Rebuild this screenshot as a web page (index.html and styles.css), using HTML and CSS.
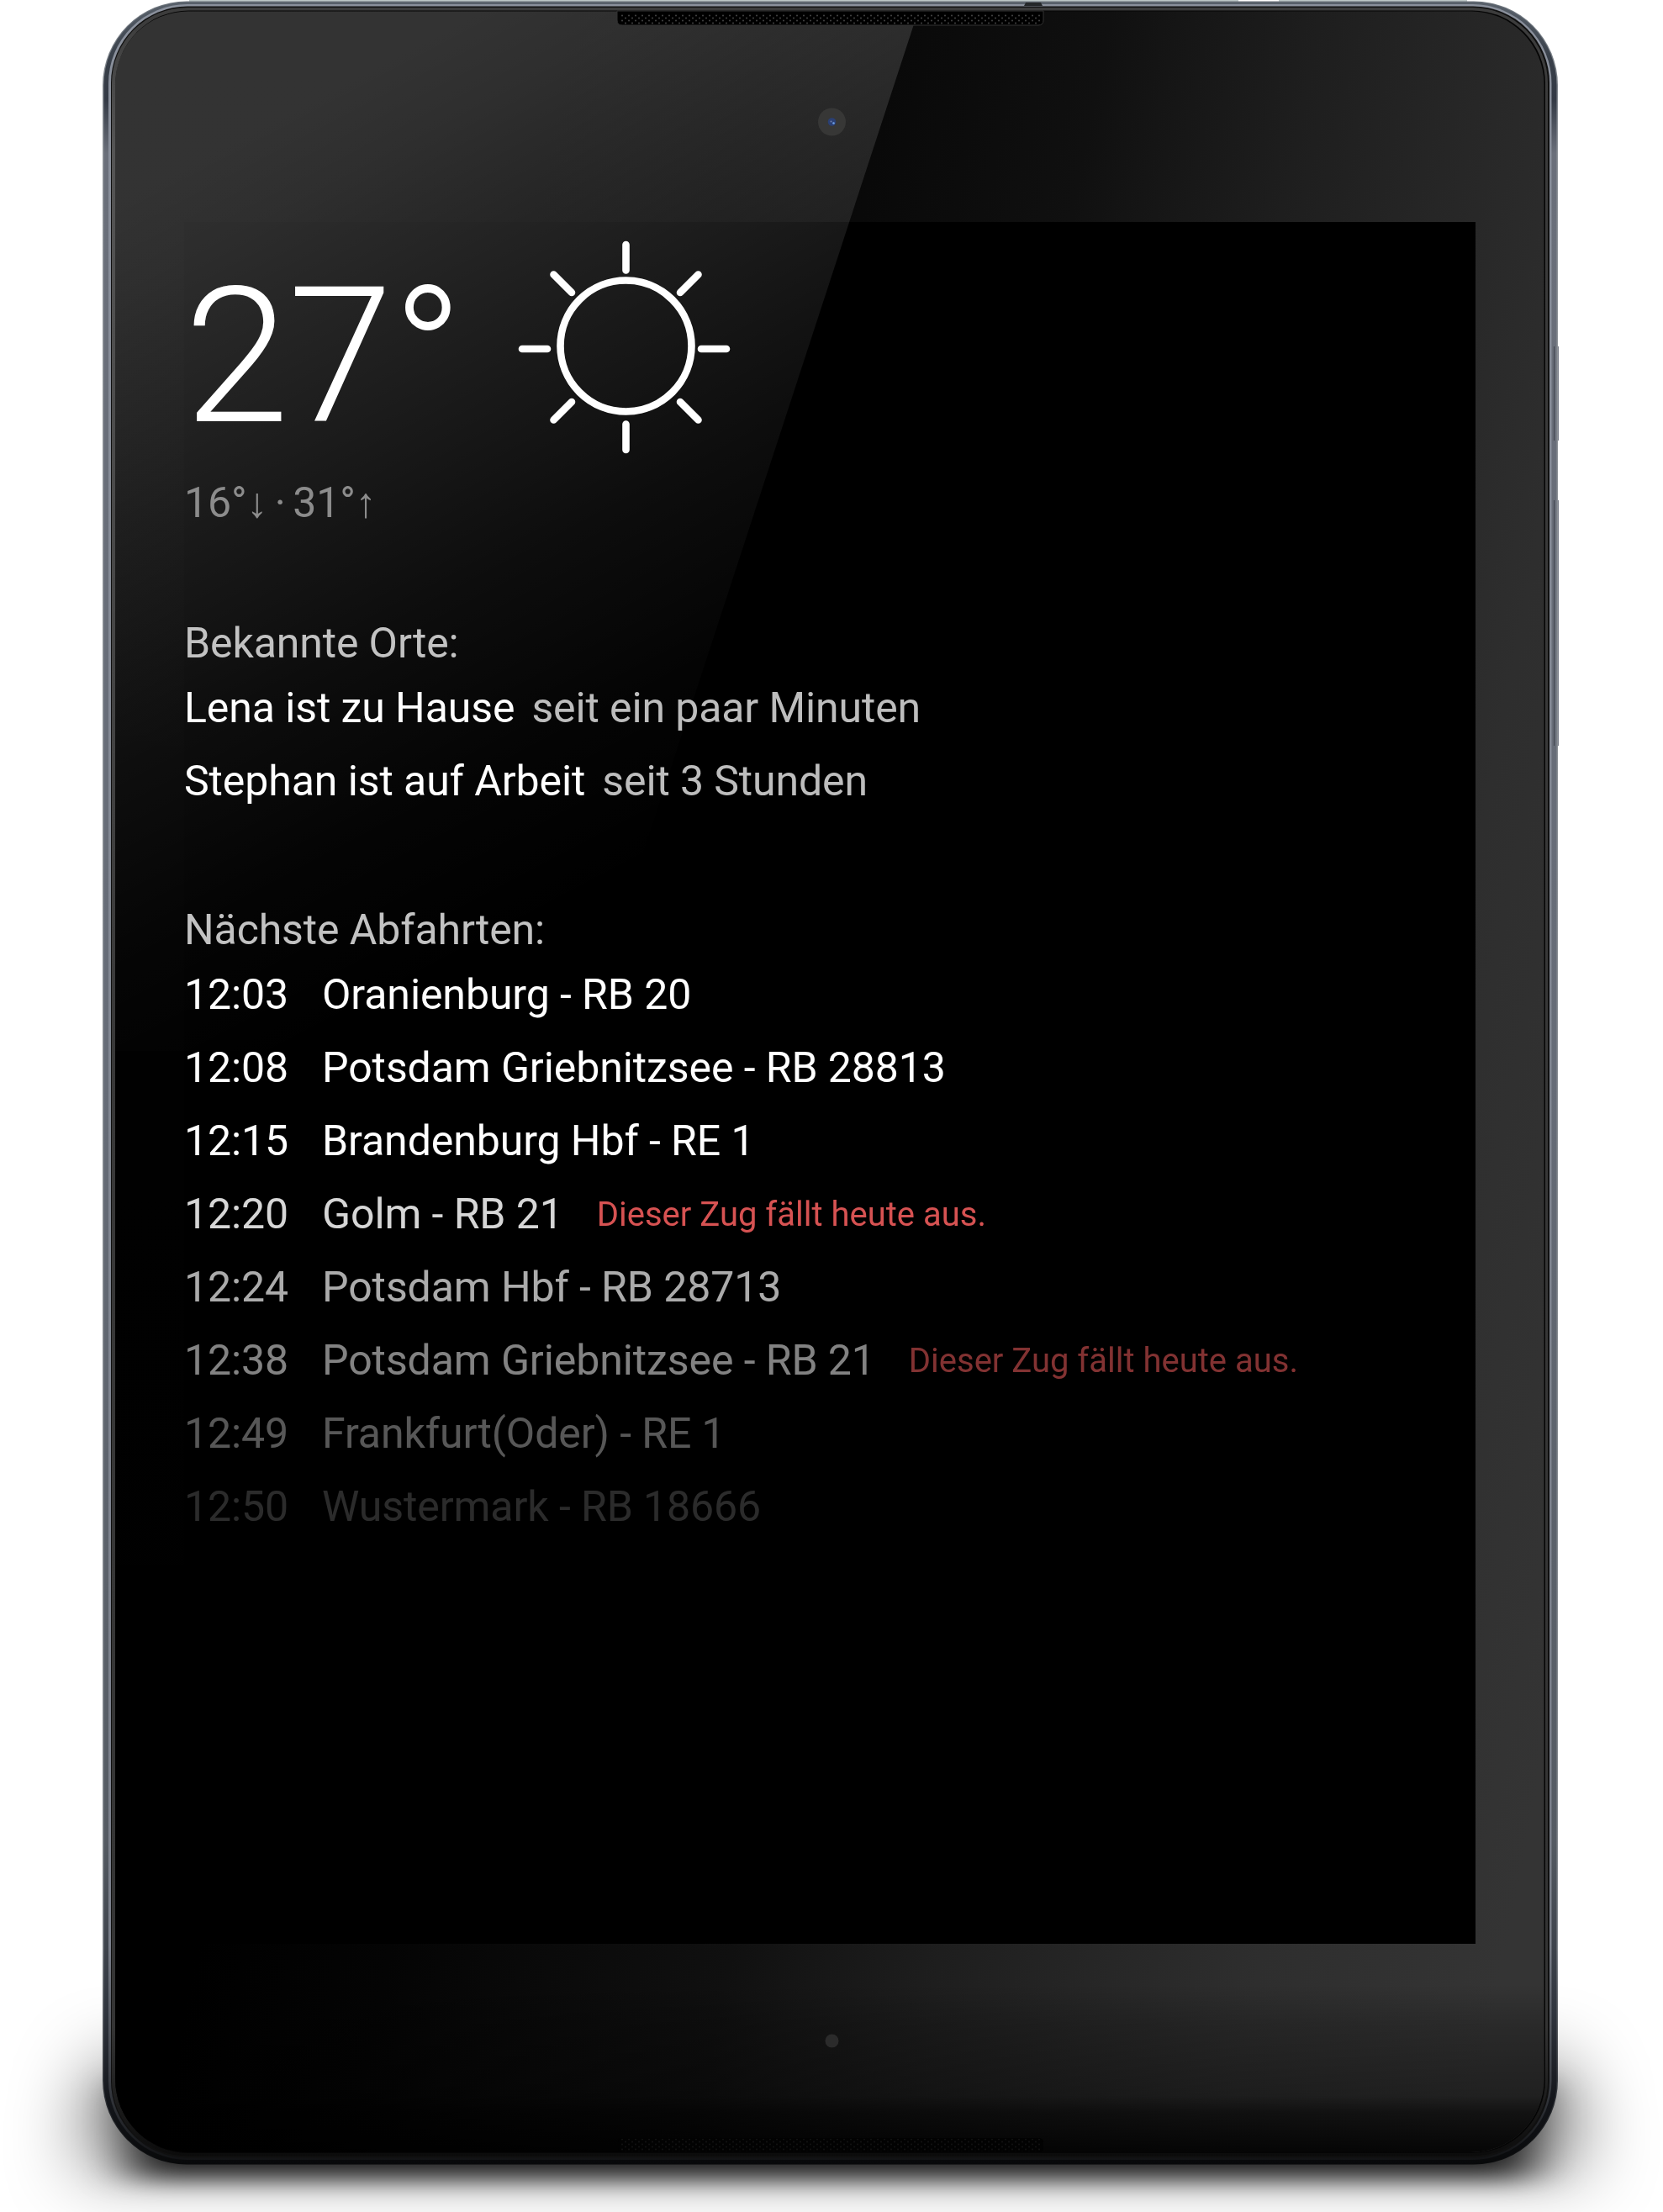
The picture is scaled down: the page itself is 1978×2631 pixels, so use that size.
FILE: index.html
```html
<!DOCTYPE html>
<html lang="de">
<head>
<meta charset="utf-8">
<title>Smart Mirror</title>
<link rel="stylesheet" href="styles.css">
</head>
<body>
<div class="stage">
  <svg class="device" width="1978" height="2631" viewBox="0 0 1978 2631" aria-hidden="true">
    <defs>
      <filter id="soft" x="-20%" y="-150%" width="140%" height="400%"><feGaussianBlur stdDeviation="42 44"/></filter>
      <filter id="tight" x="-20%" y="-150%" width="140%" height="400%"><feGaussianBlur stdDeviation="30 14"/></filter>
      <linearGradient id="edge" x1="0" y1="0" x2="0" y2="1">
        <stop offset="0" stop-color="#6d747c"/><stop offset=".07" stop-color="#8d9298"/>
        <stop offset=".9" stop-color="#80858b"/><stop offset=".97" stop-color="#2b2e33"/>
        <stop offset="1" stop-color="#08090a"/>
      </linearGradient>
      <linearGradient id="metal" x1="0" y1="0" x2="0" y2="1">
        <stop offset="0" stop-color="#59616b"/><stop offset=".025" stop-color="#39404a"/>
        <stop offset=".045" stop-color="#343a45"/><stop offset=".07" stop-color="#6a6f7a"/>
        <stop offset=".5" stop-color="#666c77"/><stop offset=".85" stop-color="#555b63"/>
        <stop offset=".93" stop-color="#30353e"/><stop offset=".97" stop-color="#14161b"/>
        <stop offset="1" stop-color="#08090a"/>
      </linearGradient>
      <linearGradient id="shine" x1="0" y1="0" x2="0" y2="1">
        <stop offset="0" stop-color="#8a909c"/><stop offset=".9" stop-color="#7b808b"/>
        <stop offset=".97" stop-color="#33363c"/><stop offset="1" stop-color="#111214"/>
      </linearGradient>
      <linearGradient id="rim" x1="0" y1="0" x2="0" y2="1">
        <stop offset="0" stop-color="#3c3c3c"/><stop offset=".94" stop-color="#343434"/><stop offset="1" stop-color="#0b0b0b"/>
      </linearGradient>
      <linearGradient id="rimlight" x1="0" y1="0" x2="0" y2="1">
        <stop offset="0" stop-color="#fff" stop-opacity=".02"/><stop offset=".12" stop-color="#fff" stop-opacity=".13"/>
        <stop offset="1" stop-color="#fff" stop-opacity="0"/>
      </linearGradient>
      <linearGradient id="glass" gradientUnits="userSpaceOnUse" x1="0" y1="0" x2="2207" y2="432">
        <stop offset=".3" stop-color="#000"/><stop offset=".4" stop-color="#040404"/><stop offset=".469" stop-color="#090909"/>
        <stop offset=".578" stop-color="#101010"/><stop offset=".613" stop-color="#151515"/>
        <stop offset=".687" stop-color="#1e1e1e"/><stop offset=".766" stop-color="#262626"/>
        <stop offset=".853" stop-color="#2e2e2e"/><stop offset=".98" stop-color="#343434"/>
      </linearGradient>
      <linearGradient id="floor" gradientUnits="userSpaceOnUse" x1="0" y1="2360" x2="0" y2="2561">
        <stop offset="0" stop-color="#000" stop-opacity="0"/><stop offset=".25" stop-color="#000" stop-opacity=".2"/>
        <stop offset=".66" stop-color="#000" stop-opacity=".38"/><stop offset=".76" stop-color="#000" stop-opacity=".65"/>
        <stop offset="1" stop-color="#000" stop-opacity=".9"/>
      </linearGradient>
      <linearGradient id="glare" gradientUnits="userSpaceOnUse" x1="178" y1="217" x2="644" y2="1102">
        <stop offset="0" stop-color="#fff" stop-opacity=".193"/><stop offset="0.1" stop-color="#fff" stop-opacity=".175"/>
        <stop offset=".4" stop-color="#fff" stop-opacity=".1"/><stop offset=".6" stop-color="#fff" stop-opacity=".052"/>
        <stop offset=".8" stop-color="#fff" stop-opacity=".018"/><stop offset="1" stop-color="#fff" stop-opacity="0"/>
      </linearGradient>
      <linearGradient id="haze" x1="0" y1="0" x2="0" y2="1">
        <stop offset="0" stop-color="#fff" stop-opacity=".01"/><stop offset="1" stop-color="#fff" stop-opacity="0"/>
      </linearGradient>
      <pattern id="mesh" width="8" height="6" patternUnits="userSpaceOnUse" x="738" y="17">
        <circle cx="2" cy="1.5" r="1" fill="#444"/><circle cx="6" cy="4.5" r="1" fill="#444"/>
      </pattern>
    </defs>

    <path d="M112 2458H1866L1890 2575H88Z" fill="#000" fill-opacity=".48" filter="url(#soft)"/>
    <rect x="155" y="2475" width="1668" height="117" fill="#000" fill-opacity=".82" filter="url(#tight)"/>

    <path d="M225 0H1473V3H1521V0H1745V3H225Z" fill="#bcc6c6"/>
    <rect x="1847" y="412" width="7" height="112" fill="#7a7e89"/>
    <rect x="1847" y="595" width="7" height="292" fill="#7a7e89"/>
    <rect x="122" y="1.500" width="1731" height="2573" rx="100" fill="url(#edge)"/>
    <rect x="123.500" y="2.500" width="1728" height="2571" rx="98.500" fill="url(#metal)"/>
    <rect x="129" y="5" width="1716.500" height="2564" rx="94" fill="url(#shine)"/>
    <rect x="132" y="7.500" width="1711" height="2559" rx="91" fill="#101010"/>
    <rect x="133" y="9" width="1708" height="2555.500" rx="90" fill="url(#rim)"/>
    <path d="M1848.500 412V524M1848.500 595V887" stroke="#41454e" stroke-width="1"/>
    <rect x="137.500" y="12.500" width="1700.500" height="2548.500" rx="87" fill="#050505"/>
    <rect x="137" y="13.500" width="1699.500" height="2546.500" rx="87" fill="url(#glass)"/>
    <rect x="137" y="13.500" width="1699.500" height="2546.500" rx="87" fill="url(#floor)"/>
    <path d="M133 1250V99A90 90 0 0 1 160 36L163 39A87 87 0 0 0 137 100V1250Z" fill="url(#rimlight)"/>
    <rect x="219" y="264" width="1536" height="2048" fill="#000"/>
    <path d="M137 1250V100A87 87 0 0 1 224 13.500H1092L688 1250Z" fill="url(#glare)"/>
    <path d="M137 2312V100A87 87 0 0 1 224 13.500H1092L1010 264H219V2312Z" fill="url(#haze)"/>

    <path d="M1218 7L1220 3H1238L1240 7Z" fill="#25282a"/>
    <path d="M734 13H1241V24Q1241 30 1235 30H740Q734 30 734 24Z" fill="#000" stroke="#333" stroke-width="1"/>
    <rect x="738" y="17" width="501" height="12" fill="url(#mesh)"/>
    <rect x="735" y="2543" width="506" height="17" rx="5" fill="#020202"/>
    <rect x="738" y="2544" width="501" height="15" fill="url(#mesh)" opacity=".25"/>
    <circle cx="989.500" cy="145" r="16.500" fill="#373736"/>
    <circle cx="989.500" cy="145" r="4.800" fill="#2a3f73"/>
    <circle cx="991.500" cy="146.500" r="1.300" fill="#6fa4ea"/>
    <circle cx="988.500" cy="144.500" r="1" fill="#7180ae"/>
    <circle cx="989.500" cy="2427.500" r="8" fill="#2b2b2b"/>
  </svg>

  <main class="screen">
    <section class="weather">
      <div class="now">
        <span class="temp">27°</span>
        <svg class="sun" width="256" height="256" viewBox="0 0 256 256" fill="none" stroke="#fff" stroke-width="8.600" stroke-linecap="round" aria-label="Sonnig">
          <circle cx="128.500" cy="127.500" r="78"/>
          <path d="M128.500 7V37.500M128.500 220.500V251M5 131H35M218 131H248M42.500 42.500L64 64M214.500 42.500L193 64M42.500 215.500L64 194M214.500 215.500L193 194"/>
        </svg>
      </div>
      <div class="range">16°<span class="arrow">↓</span> · 31°<span class="arrow">↑</span></div>
    </section>

    <section class="places">
      <h2>Bekannte Orte:</h2>
      <ul>
        <li><span>Lena ist zu Hause</span><span class="since">seit ein paar Minuten</span></li>
        <li><span>Stephan ist auf Arbeit</span><span class="since">seit 3 Stunden</span></li>
      </ul>
    </section>

    <section class="departures">
      <h2>Nächste Abfahrten:</h2>
      <ul>
        <li><time>12:03</time><span>Oranienburg - RB 20</span></li>
        <li><time>12:08</time><span>Potsdam Griebnitzsee - RB 28813</span></li>
        <li><time>12:15</time><span>Brandenburg Hbf - RE 1</span></li>
        <li class="fade-1"><time>12:20</time><span>Golm - RB 21</span><span class="alert">Dieser Zug fällt heute aus.</span></li>
        <li class="fade-2"><time>12:24</time><span>Potsdam Hbf - RB 28713</span></li>
        <li class="fade-3"><time>12:38</time><span>Potsdam Griebnitzsee - RB 21</span><span class="alert">Dieser Zug fällt heute aus.</span></li>
        <li class="fade-4"><time>12:49</time><span>Frankfurt(Oder) - RE 1</span></li>
        <li class="fade-5"><time>12:50</time><span>Wustermark - RB 18666</span></li>
      </ul>
    </section>
  </main>
</div>
</body>
</html>
```
FILE: styles.css
```css
* { box-sizing: border-box; }

body {
  margin: 0;
  background: #fff;
  font-family: Roboto, sans-serif;
  font-size: 50px;
  letter-spacing: -0.09px;
  color: #fff;
}

.stage {
  position: relative;
  width: 1978px;
  height: 2631px;
  padding: 264px 223px 319px 219px;
  overflow: hidden;
}

/* The tablet body is painted behind the screen content. */
.device {
  position: absolute;
  inset: 0;
  display: block;
}

.screen {
  position: relative;
  height: 2048px;
  white-space: nowrap;
}

h2, ul { margin: 0; padding: 0; }

h2 {
  margin-bottom: 4px;
  font-size: inherit;
  font-weight: 400;
  line-height: 60px;
  letter-spacing: -0.12px;
  color: #c2c2c2;
}

ul { list-style: none; }

li {
  display: flex;
  align-items: center;
  height: 87px;
  line-height: 87px;
}

.now {
  display: flex;
  align-items: flex-start;
  height: 304px;
}

.temp {
  width: 397px;
  padding-top: 48px;
  font-size: 225px;
  font-weight: 300;
  line-height: 225px;
  letter-spacing: -1.2px;
}

.sun { margin-top: 20px; }

.range {
  line-height: 60px;
  word-spacing: -4px;
  color: #8c8c8c;
}

.arrow { font-family: "Liberation Serif", serif; line-height: 1; }

.places { margin-top: 107px; }
.places li { gap: 20px; }
.since { color: #bdbdbd; letter-spacing: -0.12px; }

.departures { margin-top: 103px; }
.departures li { gap: 40px; }
.alert { font-size: 40px; letter-spacing: 0; color: #ff6262; }

.fade-1 { opacity: .84; }
.fade-2 { opacity: .67; }
.fade-3 { opacity: .51; }
.fade-4 { opacity: .34; }
.fade-5 { opacity: .17; }
```
